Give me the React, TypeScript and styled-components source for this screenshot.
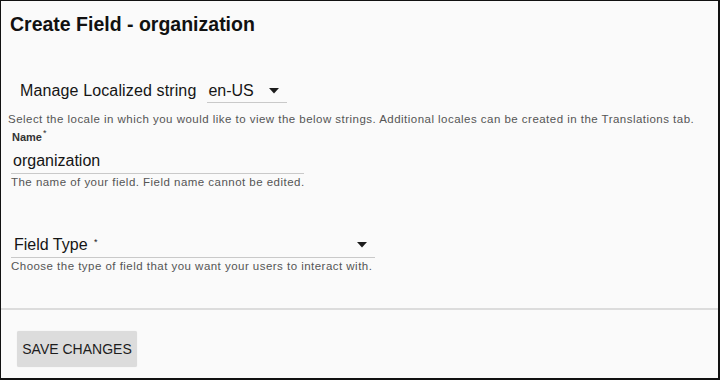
import React from 'react';
import styled, { createGlobalStyle } from 'styled-components';

const GlobalStyle = createGlobalStyle`
  html, body {
    margin: 0;
    padding: 0;
    background: #fafafa;
  }
  body {
    font-family: 'Liberation Sans', Arial, Helvetica, sans-serif;
    color: #111;
  }
`;

const Caret = () => (
  <svg width="10" height="6" viewBox="0 0 10 6" aria-hidden="true">
    <path d="M0 0h10L5 5.5z" fill="#1c1c1c" />
  </svg>
);

type SelectProps = {
  value?: string;
  placeholder?: string;
  required?: boolean;
};

const Select = ({ value, placeholder, required }: SelectProps) => (
  <SelectBox>
    <span className="value">
      {value ?? placeholder}
      {required ? <Star>*</Star> : null}
    </span>
    <Caret />
  </SelectBox>
);

const App = () => {
  return (
    <>
      <GlobalStyle />
      <Frame>
        <Title>Create Field - organization</Title>

        <Body>
          <LocaleRow>
            <LocaleLabel>Manage Localized string</LocaleLabel>
            <LocaleSelect>
              <Select value="en-US" />
            </LocaleSelect>
          </LocaleRow>
          <Helper $top={9}>
            Select the locale in which you would like to view the below strings. Additional locales
            can be created in the Translations tab.
          </Helper>

          <NameField>
            <FieldLabel>
              Name<Star>*</Star>
            </FieldLabel>
            <TextInput>organization</TextInput>
            <Helper $top={1}>The name of your field. Field name cannot be edited.</Helper>
          </NameField>

          <TypeField>
            <Select placeholder="Field Type " required />
            <Helper $top={1}>
              Choose the type of field that you want your users to interact with.
            </Helper>
          </TypeField>
        </Body>

        <Divider />

        <Footer>
          <SaveButton type="button">SAVE CHANGES</SaveButton>
        </Footer>
      </Frame>
    </>
  );
};

export default App;

const Frame = styled.div`
  box-sizing: border-box;
  width: 720px;
  height: 380px;
  display: flex;
  flex-direction: column;
  border-style: solid;
  border-color: #111;
  border-width: 1px 2px 2px 1px;
  background: #fafafa;
  overflow: hidden;
`;

const Title = styled.h1`
  margin: 0;
  padding: 11px 0 0 9px;
  font-size: 19.5px;
  line-height: 24px;
  font-weight: 700;
  color: #111;
`;

const Body = styled.div`
  padding-left: 7px;
  display: flex;
  flex-direction: column;
  align-items: flex-start;
`;

const LocaleRow = styled.div`
  margin-top: 45px;
  padding-left: 12px;
  display: flex;
  align-items: flex-start;
  gap: 11px;
`;

const LocaleLabel = styled.span`
  font-size: 16px;
  line-height: 20px;
  letter-spacing: 0.13px;
  color: #151515;
`;

const LocaleSelect = styled.div`
  width: 80px;
`;

const SelectBox = styled.div`
  box-sizing: border-box;
  width: 100%;
  display: flex;
  align-items: center;
  justify-content: space-between;
  padding: 0 8px 1px 1px;
  border-bottom: 1px solid #c9c9c9;
  font-size: 16px;
  line-height: 20px;
  color: #151515;

  svg {
    flex: none;
    margin-top: -1px;
  }
`;

const Star = styled.sup`
  font-size: 9px;
  line-height: 0;
  vertical-align: 5px;
  margin-left: 2px;
`;

const Helper = styled.p<{ $top: number }>`
  margin: ${(p) => p.$top}px 0 0;
  font-size: 11.5px;
  line-height: 14px;
  letter-spacing: 0.47px;
  color: #555;
  white-space: nowrap;
`;

const NameField = styled.div`
  margin: 5px 0 0 3px;
  width: 293px;
`;

const FieldLabel = styled.label`
  display: block;
  padding-left: 1px;
  font-size: 11px;
  line-height: 13px;
  font-weight: 700;
  color: #333;

  sup {
    font-weight: 400;
    margin-left: 1px;
  }
`;

const TextInput = styled.div`
  margin-top: 7px;
  padding: 0 0 2px 2px;
  border-bottom: 1px solid #c9c9c9;
  font-size: 16px;
  line-height: 20px;
  color: #151515;
`;

const TypeField = styled.div`
  margin: 46px 0 0 3px;
  width: 364px;

  ${SelectBox} {
    padding: 0 8px 2px 3px;
  }
`;

const Divider = styled.hr`
  margin: 35px 0 0;
  border: 0;
  height: 2px;
  background: #dcdcdc;
`;

const Footer = styled.div`
  padding: 21px 0 0 16px;
`;

const SaveButton = styled.button`
  width: 120px;
  height: 36px;
  border: 0;
  border-radius: 2px;
  background: #dcdcdc;
  box-shadow: 0 0 1px rgba(0, 0, 0, 0.12);
  font-family: 'Liberation Sans', Arial, sans-serif;
  font-size: 14px;
  font-weight: 400;
  color: #1d1d1d;
  padding: 0;
  cursor: pointer;
`;
